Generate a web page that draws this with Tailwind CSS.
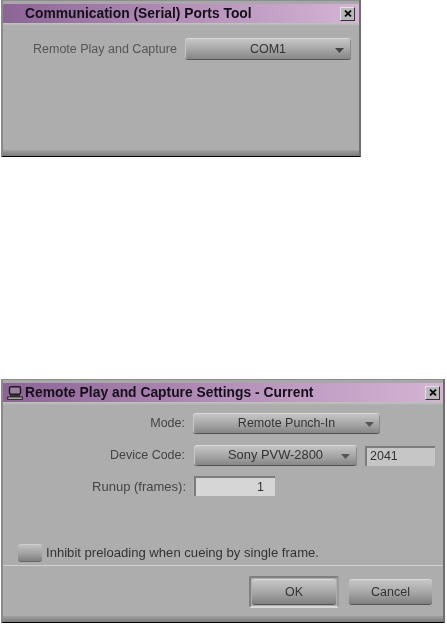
<!DOCTYPE html>
<html><head><meta charset="utf-8"><script src="https://cdn.jsdelivr.net/npm/@tailwindcss/browser@4"></script></head>
<body class="bg-white">
<div class="w-[447px] h-[624px] overflow-hidden bg-white font-['Liberation_Sans',sans-serif] text-[12.5px] leading-none text-[#3a3a3a] blur-[0.45px]">
  <!-- Window 1 -->
  <div class="ml-px w-[360px] h-[157px] flex flex-col bg-[#adadad] border-l-2 border-r-2 border-b border-l-[#8a8a8a] border-r-[#6e6e6e] border-b-black">
    <div class="h-1 bg-[#a8a8a8] border-t border-[#8d8d8d]"></div>
    <div class="h-[19px] flex items-center justify-between pl-[22px] pr-[4px] bg-gradient-to-r from-[#8d6496] via-[#b48fb8] to-[#d4b4d5]">
      <span class="font-bold text-[13.85px] text-[#14101a]">Communication (Serial) Ports Tool</span>
      <div class="w-[15px] h-[14px] flex items-center justify-center bg-[#b9b9b9] border border-t-[#e2e2e2] border-l-[#e2e2e2] border-r-[#333] border-b-[#333]">
        <svg width="8" height="7" viewBox="0 0 8 7"><path d="M1 0.5 L7 6.5 M7 0.5 L1 6.5" stroke="#111" stroke-width="1.8"/></svg>
      </div>
    </div>
    <div class="h-[3px] bg-gradient-to-b from-[#c4c4c4] to-[#adadad]"></div>
    <div class="flex-1 pt-[12px] pl-[30px] flex items-start">
      <span class="w-[152px] h-[22px] flex items-center text-[#555]">Remote Play and Capture</span>
      <div class="relative w-[166px] h-[22px] flex items-center justify-center rounded-[3px] bg-gradient-to-b from-[#c6c6c6] via-[#a8a8a8] to-[#878787] border-t border-t-[#d8d8d8] border-b border-b-[#555] shadow-[inset_1px_0_0_#c8c8c8,inset_-1px_0_0_#8a8a8a]">
        <span class="text-[#333]">COM1</span>
        <svg class="absolute right-[7px] top-[9px]" width="9" height="5" viewBox="0 0 9 5"><path d="M0 0 H9 L4.5 5 Z" fill="#444"/></svg>
      </div>
    </div>
    <div class="h-[6px] bg-gradient-to-b from-[#a0a0a0] to-[#7c7c7c]"></div>
  </div>

  <!-- Window 2 -->
  <div class="mt-[222px] ml-px w-[444px] h-[244px] flex flex-col bg-[#adadad] border-l-2 border-r-2 border-b border-l-[#8a8a8a] border-r-[#6e6e6e] border-b-black">
    <div class="h-1 bg-[#a8a8a8] border-t border-[#8d8d8d]"></div>
    <div class="h-[19px] flex items-center justify-between pl-[4px] pr-[3px] bg-gradient-to-r from-[#8d6496] via-[#b48fb8] to-[#d4b4d5]">
      <div class="flex items-center gap-[2px]">
        <svg width="16" height="14" viewBox="0 0 16 14" fill="none"><rect x="2.5" y="0.8" width="11" height="7.5" rx="1.5" stroke="#1a1a1a" stroke-width="1.4" fill="#9a80a0"/><path d="M3 10H13" stroke="#1a1a1a" stroke-width="1.4"/><rect x="0.7" y="11" width="14.6" height="2.3" fill="#c9c9c9" stroke="#1a1a1a" stroke-width="1"/></svg>
        <span class="font-bold text-[13.85px] text-[#14101a]">Remote Play and Capture Settings - Current</span>
      </div>
      <div class="w-[15px] h-[14px] flex items-center justify-center bg-[#b9b9b9] border border-t-[#e2e2e2] border-l-[#e2e2e2] border-r-[#333] border-b-[#333]">
        <svg width="8" height="7" viewBox="0 0 8 7"><path d="M1 0.5 L7 6.5 M7 0.5 L1 6.5" stroke="#111" stroke-width="1.8"/></svg>
      </div>
    </div>
    <div class="h-[3px] bg-gradient-to-b from-[#c4c4c4] to-[#adadad]"></div>

    <div class="flex-1 flex flex-col pt-[8px] text-[#444]">
      <div class="flex items-center h-[21px]">
        <span class="w-[182px] text-right">Mode:</span>
        <div class="relative ml-[8px] w-[187px] h-[21px] flex items-center justify-center rounded-[3px] bg-gradient-to-b from-[#c6c6c6] via-[#a8a8a8] to-[#878787] border-t border-t-[#d8d8d8] border-b border-b-[#555] shadow-[inset_1px_0_0_#c8c8c8,inset_-1px_0_0_#8a8a8a]">
          <span class="text-[#333]">Remote Punch-In</span>
          <svg class="absolute right-[6px] top-[8px]" width="9" height="5" viewBox="0 0 9 5"><path d="M0 0 H9 L4.5 5 Z" fill="#555"/></svg>
        </div>
      </div>
      <div class="flex items-center h-[21px] mt-[11px]">
        <span class="w-[182px] text-right">Device Code:</span>
        <div class="relative ml-[9px] w-[163px] h-[21px] flex items-center justify-center rounded-[3px] bg-gradient-to-b from-[#c6c6c6] via-[#a8a8a8] to-[#878787] border-t border-t-[#d8d8d8] border-b border-b-[#555] shadow-[inset_1px_0_0_#c8c8c8,inset_-1px_0_0_#8a8a8a]">
          <span class="text-[12.9px] text-[#333]">Sony PVW-2800</span>
          <svg class="absolute right-[7px] top-[8px]" width="9" height="5" viewBox="0 0 9 5"><path d="M0 0 H9 L4.5 5 Z" fill="#555"/></svg>
        </div>
        <div class="ml-[8px] w-[70px] h-[20px] flex items-center pl-[3px] bg-[#c6c6c6] border-t-2 border-l-2 border-t-[#7d7d7d] border-l-[#7d7d7d] text-[#333]">2041</div>
      </div>
      <div class="flex items-center h-[20px] mt-[10px]">
        <span class="w-[183px] text-right text-[13px]">Runup (frames):</span>
        <div class="ml-[8px] w-[81px] h-[20px] flex items-center justify-end pr-[11px] bg-[#d6d6d6] border-t-2 border-l-2 border-t-[#7d7d7d] border-l-[#7d7d7d] text-[#333]">1</div>
      </div>
      <div class="flex items-center h-[18px] mt-[48px] pl-[15px]">
        <div class="w-[24px] h-[18px] rounded-[3px] bg-gradient-to-b from-[#c0c0c0] via-[#a4a4a4] to-[#808080] border-t border-t-[#cfcfcf] border-b border-b-[#666]"></div>
        <span class="ml-[4px] text-[13.1px] text-[#333]">Inhibit preloading when cueing by single frame.</span>
      </div>
    </div>

    <div class="h-[51px] mt-[3px] border-t border-t-[#d0d0d0] flex items-start justify-end pt-[10px] pr-[11px] gap-[10px] text-[#333]">
      <div class="w-[90px] h-[32px] flex items-center justify-center border-[2px] border-t-[#808080] border-l-[#808080] border-r-[#9c9c9c] border-b-[#d8d8d8] p-[1px] rounded-[2px]">
        <div class="w-full h-full flex items-center justify-center rounded-[3px] bg-gradient-to-b from-[#c6c6c6] via-[#a8a8a8] to-[#808080] border-t border-t-[#d8d8d8] border-b border-b-[#555]">OK</div>
      </div>
      <div class="w-[83px] h-[26px] mt-[3px] flex items-center justify-center rounded-[3px] bg-gradient-to-b from-[#c6c6c6] via-[#a8a8a8] to-[#808080] border-t border-t-[#d8d8d8] border-b border-b-[#555]">Cancel</div>
    </div>
    <div class="h-[6px] bg-gradient-to-b from-[#a0a0a0] to-[#7c7c7c]"></div>
  </div>
</div>
</body></html>
